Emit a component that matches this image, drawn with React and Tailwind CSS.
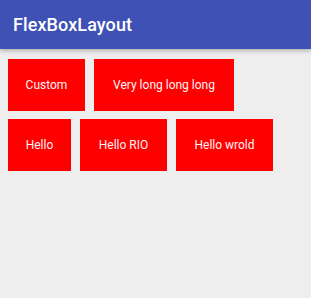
import React from 'react';

const rows = [
    [{ label: 'Custom', w: 'w-[77px]' }, { label: 'Very long long long', w: 'w-[140px]' }],
    [{ label: 'Hello', w: 'w-[63px]' }, { label: 'Hello RIO', w: 'w-[87px]' }, { label: 'Hello wrold', w: 'w-[97px]' }],
];

const App = () => {
    return (
        <div className="w-[311px] h-[298px] bg-[#eeeeee] overflow-hidden" style={{ fontFamily: 'Roboto, sans-serif' }}>
            {/* Toolbar */}
            <div className="h-[49px] bg-[#3f51b5] flex items-center px-[13px] shadow-[0_2px_4px_rgba(0,0,0,0.25)] relative">
                <span className="text-white text-[18px] font-medium tracking-[0.1px]">FlexBoxLayout</span>
            </div>

            {/* Flexbox content */}
            <div className="flex flex-col gap-[8px] pt-[10px] pl-[8px]">
                {rows.map((row, i) => (
                    <div key={i} className="flex gap-[9px]">
                        {row.map((item) => (
                            <div
                                key={item.label}
                                className={`${item.w} h-[52px] bg-[#ff0000] flex items-center justify-center text-[#fff4f4] text-[12px]`}
                            >
                                {item.label}
                            </div>
                        ))}
                    </div>
                ))}
            </div>
        </div>
    );
};

export default App;
